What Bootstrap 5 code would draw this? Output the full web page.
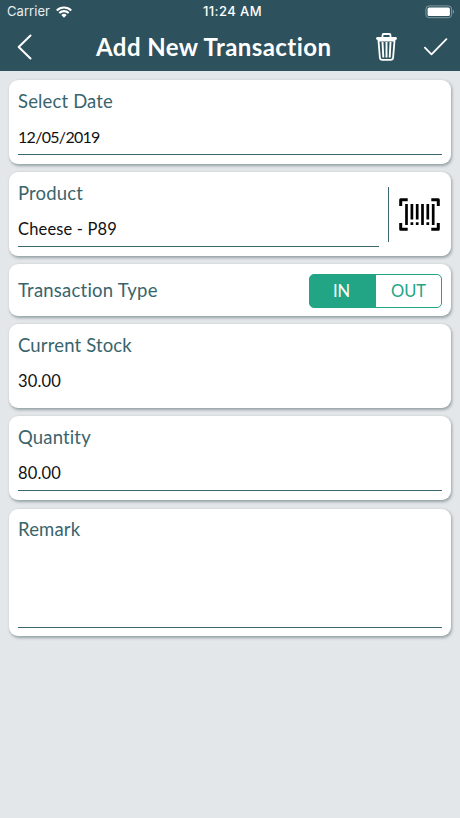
<!DOCTYPE html>
<html lang="en">
<head>
<meta charset="utf-8">
<meta name="viewport" content="width=device-width, initial-scale=1">
<title>Add New Transaction</title>
<link href="https://cdn.jsdelivr.net/npm/bootstrap@5.3.0/dist/css/bootstrap.min.css" rel="stylesheet">
<style>
body { background: #e4e7e9; font-family: Lato, "Open Sans", sans-serif; min-height: 100vh; overflow: hidden; }
svg { display: block; flex: none; }
.app-header { background: #2e525d; color: #fff; height: 71px; }
.status-bar { height: 23px; font: 13px/23px Inter, sans-serif; padding: 0 5px 0 7px; }
.status-bar > * { flex: 1 1 0; }
.carrier { letter-spacing: .05px; color: #e6edf0; }
.wifi { margin-left: 6px; }
.clock { font-weight: 500; font-size: 13px; letter-spacing: .45px; padding-left: 3px; }
.title-bar { height: 48px; padding: 0 12px 0 17px; }
.title-bar h1 { font-size: 24px; line-height: 48px; font-weight: 700; letter-spacing: .43px; width: 240px; margin-left: 64px; white-space: nowrap; }
.icon-btn { background: none; border: 0; padding: 0; color: #fff; }
.save-btn { margin-left: 26px; }
.form-stack { padding: 9px 9px 0; gap: 8.7px; }
.panel { background: #fff; border-radius: 9px; box-shadow: 1px 1.5px 3px rgba(40,70,76,.42); height: 83.5px; padding: 0 9px; }
.panel-type { height: 51.2px; }
.panel-remark { height: 127.8px; }
.caption { color: #39646c; font-size: 18.5px; line-height: 24px; letter-spacing: .15px; padding-top: 8.7px; white-space: nowrap; }
.panel-type .caption { padding: 0; letter-spacing: .22px; }
.entry { color: #111; font-size: 16.5px; line-height: 24px; letter-spacing: .15px; padding: 0 0 6px; margin-top: 12.3px; border: 0; outline: 0; background: transparent; width: 100%; height: 30px; display: block; resize: none; }
.entry-date { font-size: 16px; letter-spacing: -.7px; padding-bottom: 5px; }
.ruled { border-bottom: 1px solid #3b6870; border-radius: 0; }
.panel-remark .entry { height: 74px; }
.scan-btn { border-left: 1px solid #3b6870; border-radius: 0; width: 63px; height: 55px; margin: 15px -9px 0 9px; padding-right: 1px; }
.switch-group { width: 133px; height: 34px; margin-top: 2px; }
.switch-group .btn { --bs-btn-color: #22a585; --bs-btn-border-color: #22a585; --bs-btn-hover-bg: #22a585; --bs-btn-active-bg: #22a585; --bs-btn-active-border-color: #22a585; --bs-btn-active-color: #fff; --bs-btn-border-radius: 5px; flex: 0 0 67px; padding: 0 2px 0 0; font-size: 16.5px; line-height: 32px; }
.switch-group .btn + .btn { padding: 0; margin-left: -1px; }
</style>
</head>
<body>
<header class="app-header">
  <div class="status-bar d-flex align-items-center">
    <div class="d-flex align-items-center">
      <span class="carrier">Carrier</span>
      <svg class="wifi" width="16" height="12" viewBox="0 0 16 12" fill="none" stroke="#fff" stroke-width="2.1"><path d="M.8 4.4a10.3 10.3 0 0 1 14.4 0M3.3 7.1a6.7 6.7 0 0 1 9.4 0"/><path d="M5.3 9.1a3.8 3.8 0 0 1 5.4 0L8 11.8z" fill="#fff" stroke="none"/></svg>
    </div>
    <div class="clock text-center">11:24 AM</div>
    <div class="d-flex justify-content-end">
      <svg width="30" height="14" viewBox="0 0 30 14"><rect x=".9" y=".9" width="25.7" height="11.8" rx="3.2" fill="none" stroke="#8199a0"/><rect x="2.6" y="2.6" width="22.3" height="8.4" rx="1.6" fill="#fff"/><path d="M27.8 4.8c1.6.4 1.6 3.6 0 4z" fill="#8199a0"/></svg>
    </div>
  </div>
  <div class="title-bar d-flex align-items-center">
    <button class="icon-btn" aria-label="Back"><svg width="15" height="26" viewBox="0 0 15 26" fill="none" stroke="currentColor" stroke-width="2" stroke-linecap="round" stroke-linejoin="round"><path d="M13.5 1.5 1.7 13l11.8 11.5"/></svg></button>
    <h1 class="mb-0">Add New Transaction</h1>
    <button class="icon-btn ms-auto" aria-label="Delete"><svg width="22" height="30" viewBox="0 0 22 30" fill="none" stroke="currentColor" stroke-width="1.8"><path d="M6.5 5V3.2q0-1.2 1.2-1.2h5.6q1.2 0 1.2 1.2V5"/><path d="M1.5 6.5h18" stroke-width="2.8" stroke-linecap="round"/><path d="m2.5 8.7 1.4 17q.2 2.2 2.4 2.2h8.4q2.2 0 2.4-2.2l1.4-17z"/><path d="m6.5 10 .8 15.5M10.5 10v15.5M14.5 10l-.8 15.5" stroke-width="1.9"/></svg></button>
    <button class="icon-btn save-btn" aria-label="Save"><svg width="24" height="18" viewBox="0 0 24 18" fill="none" stroke="currentColor" stroke-width="1.8" stroke-linecap="round" stroke-linejoin="round"><path d="m.9 9.7 6.6 6.6L22.4 1.2"/></svg></button>
  </div>
</header>
<main class="form-stack d-flex flex-column">
  <section class="panel">
    <label class="caption d-block" for="date">Select Date</label>
    <input class="entry entry-date ruled" id="date" value="12/05/2019">
  </section>
  <section class="panel d-flex">
    <div class="flex-grow-1">
      <label class="caption d-block" for="product">Product</label>
      <input class="entry ruled" id="product" value="Cheese - P89">
    </div>
    <button class="icon-btn scan-btn d-flex align-items-center justify-content-center text-black" aria-label="Scan barcode">
      <svg width="41" height="33" viewBox="0 0 41 33" fill="none" stroke="currentColor"><path d="M1.7 8V1.8h7M32.3 1.8h7V8M1.7 25v6.2h7M32.3 31.2h7V25" stroke-width="3" stroke-linejoin="round"/><path d="M7.5 6v21M12.9 6v15.5M18.2 6v15.5M23.5 6v21M28.8 6v15.5M34.2 6v21M12.9 24.2V27M18.2 24.2V27M28.8 24.2V27" stroke-width="2.7"/></svg>
    </button>
  </section>
  <section class="panel panel-type d-flex align-items-center justify-content-between">
    <span class="caption">Transaction Type</span>
    <div class="btn-group switch-group" role="group" aria-label="Transaction Type">
      <button type="button" class="btn active">IN</button>
      <button type="button" class="btn">OUT</button>
    </div>
  </section>
  <section class="panel">
    <label class="caption d-block" for="stock">Current Stock</label>
    <input class="entry" id="stock" value="30.00" readonly>
  </section>
  <section class="panel">
    <label class="caption d-block" for="quantity">Quantity</label>
    <input class="entry ruled" id="quantity" value="80.00">
  </section>
  <section class="panel panel-remark">
    <label class="caption d-block" for="remark">Remark</label>
    <textarea class="entry ruled" id="remark"></textarea>
  </section>
</main>
<script src="https://cdn.jsdelivr.net/npm/bootstrap@5.3.0/dist/js/bootstrap.bundle.min.js"></script>
</body>
</html>
